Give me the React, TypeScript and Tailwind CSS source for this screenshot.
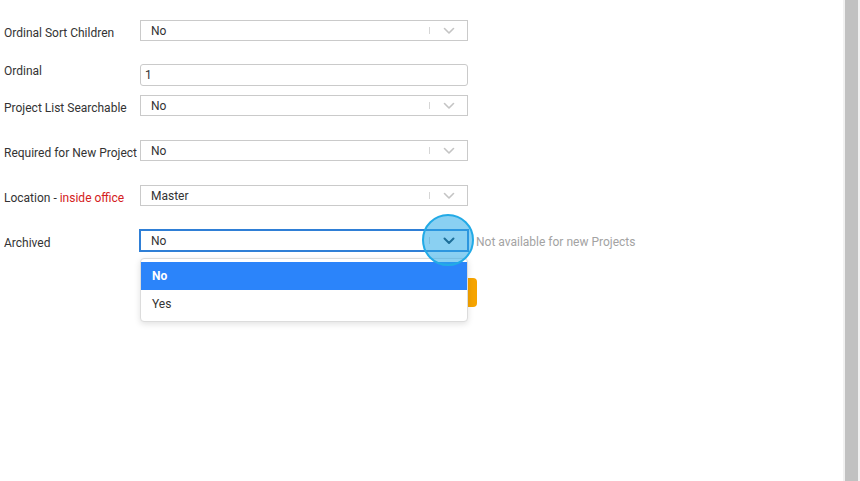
import React from "react";

function Chevron({ dark }: { dark?: boolean }) {
  return (
    <svg width="12" height="8" viewBox="0 0 12 8" className="block">
      <path
        d="M1.5 1.5 L6 6 L10.5 1.5"
        fill="none"
        stroke={dark ? "#10283c" : "#c4c4c4"}
        strokeWidth={dark ? 2 : 1.6}
        strokeLinecap="round"
        strokeLinejoin="round"
      />
    </svg>
  );
}

function Select({ value, active }: { value: string; active?: boolean }) {
  return (
    <div
      className={`flex items-center bg-white ${
        active
          ? "h-[23px] w-[330px] -ml-px border-2 border-[#2f7fd6]"
          : "h-[21px] w-[328px] border border-[#cacaca]"
      }`}
    >
      <span className="flex-1 pl-[10px] leading-[14px]">{value}</span>
      <span className="h-[7px] w-px bg-[#d6d6d6]" />
      <span className="flex w-[37px] justify-center pl-px">
        <Chevron dark={active} />
      </span>
    </div>
  );
}

function Row({
  label,
  children,
  labelPad = "pt-[6px]",
  mt,
}: {
  label: React.ReactNode;
  children: React.ReactNode;
  labelPad?: string;
  mt: string;
}) {
  return (
    <div className={`flex items-start ${mt}`}>
      <div className={`w-[140px] pl-[4px] leading-[14px] ${labelPad}`}>{label}</div>
      {children}
    </div>
  );
}

export default function App() {
  return (
    <div
      className="relative h-[481px] w-[860px] overflow-hidden bg-white text-[12px] text-[#333]"
      style={{ fontFamily: "Roboto, 'Liberation Sans', sans-serif" }}
    >
      <div className="flex h-full">
        <div className="relative flex-1 pt-[20px]">
          <Row label="Ordinal Sort Children" mt="mt-0">
            <Select value="No" />
          </Row>
          <Row label="Ordinal" mt="mt-[23px]" labelPad="pt-0">
            <div className="flex h-[22px] w-[328px] items-center rounded-[3px] border border-[#cacaca] pl-[4px] leading-[14px]">
              1
            </div>
          </Row>
          <Row label="Project List Searchable" mt="mt-[9px]">
            <Select value="No" />
          </Row>
          <Row label="Required for New Project" mt="mt-[24px]">
            <Select value="No" />
          </Row>
          <Row
            label={
              <>
                Location - <span className="text-[#d42020]">inside office</span>
              </>
            }
            mt="mt-[24px]"
          >
            <Select value="Master" />
          </Row>
          <Row label="Archived" mt="mt-[23px]" labelPad="pt-[7px]">
            <div className="flex items-center">
              <Select value="No" active />
              <span className="ml-[7px] pt-[2px] leading-[14px] text-[#a3a3a3]">Not available for new Projects</span>
            </div>
          </Row>

          <div className="ml-[400px] mt-[26px] h-[29px] w-[77px] rounded-[4px] bg-[#f6a400]" />

          {/* open dropdown */}
          <div className="absolute left-[140px] top-[258px] w-[328px] rounded-[4px] border border-[#dcdcdc] bg-white py-[3px] shadow-[0_2px_6px_rgba(0,0,0,0.12)]">
            <div className="flex h-[28px] items-center bg-[#2b84fa] pl-[11px] font-bold text-white">No</div>
            <div className="flex h-[28px] items-center pl-[11px]">Yes</div>
          </div>

          {/* click highlight */}
          <div className="absolute left-[422px] top-[214px] h-[52px] w-[52px] rounded-full border-2 border-[#22aae6] bg-[#2aa9e8]/55" />
        </div>

        <div className="flex w-[17px] bg-[#f1f1f1] px-[2px]">
          <div className="w-full bg-[#c1c1c1]" />
        </div>
      </div>
    </div>
  );
}
